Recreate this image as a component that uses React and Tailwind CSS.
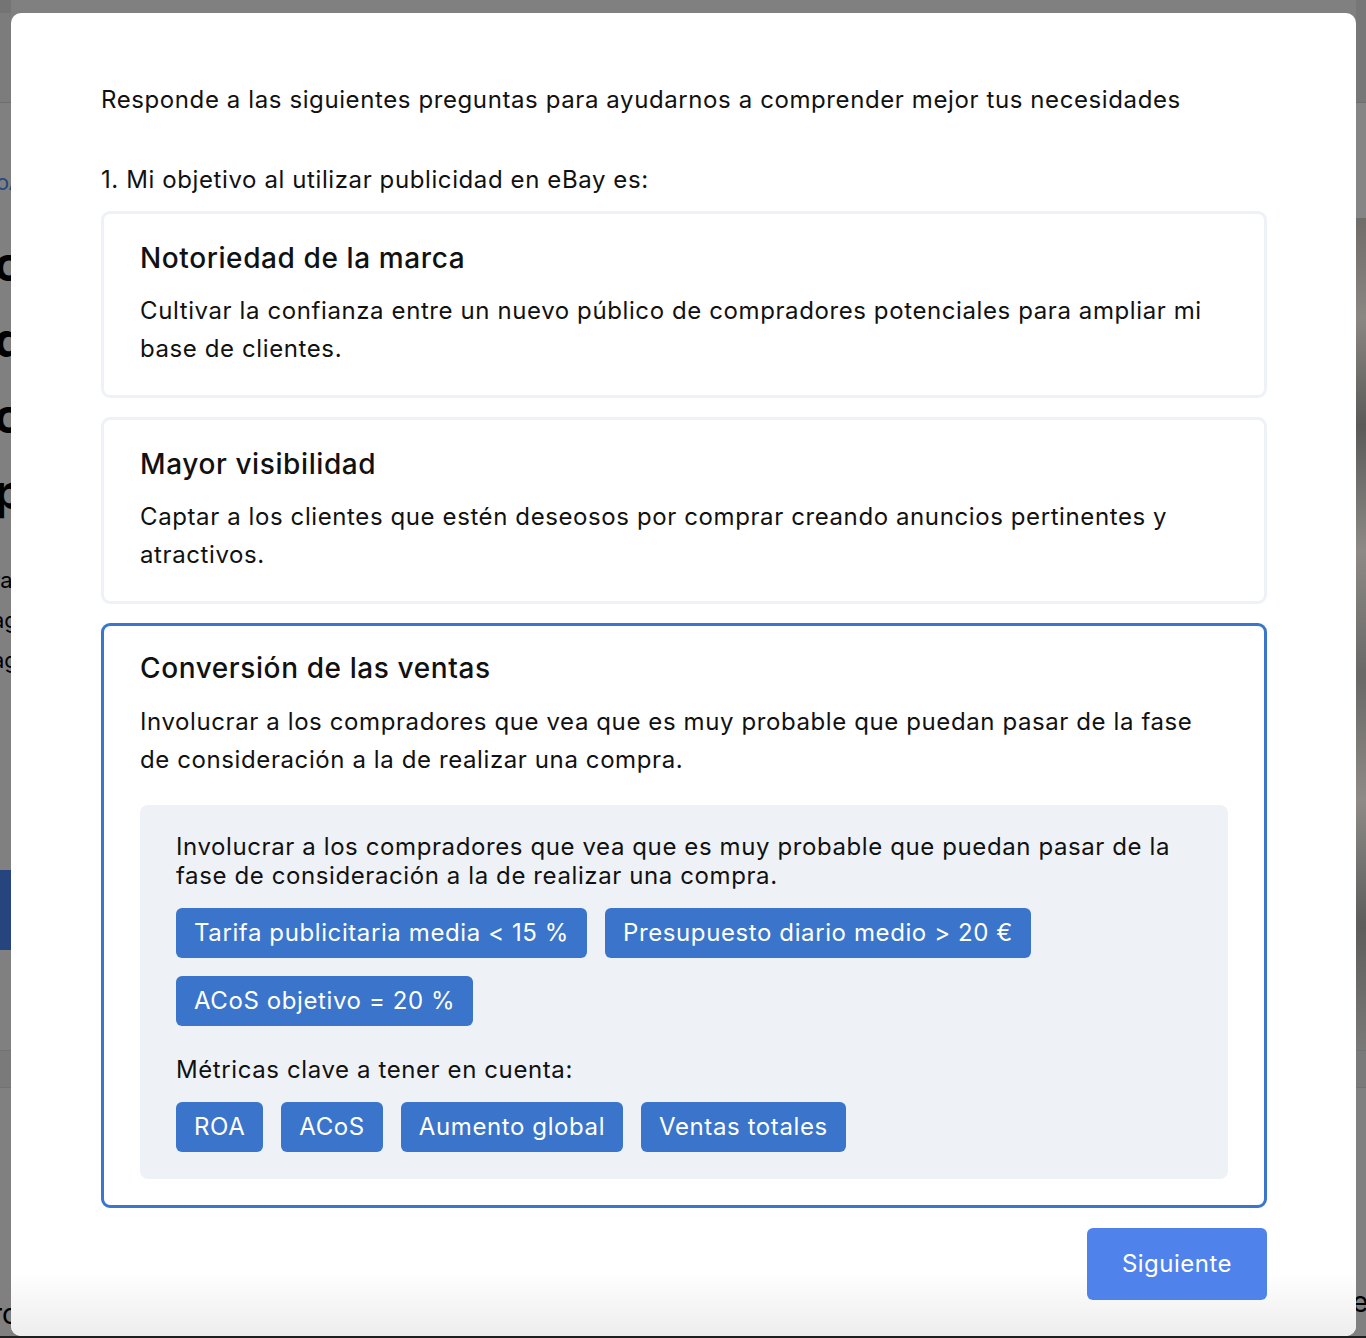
import React, { useState } from 'react';

const goals = [
  {
    id: 'brand',
    title: 'Notoriedad de la marca',
    text: 'Cultivar la confianza entre un nuevo público de compradores potenciales para ampliar mi base de clientes.',
  },
  {
    id: 'visibility',
    title: 'Mayor visibilidad',
    text: 'Captar a los clientes que estén deseosos por comprar creando anuncios pertinentes y atractivos.',
  },
  {
    id: 'conversion',
    title: 'Conversión de las ventas',
    text: 'Involucrar a los compradores que vea que es muy probable que puedan pasar de la fase de consideración a la de realizar una compra.',
  },
];

const targets = ['Tarifa publicitaria media < 15 %', 'Presupuesto diario medio > 20 €', 'ACoS objetivo = 20 %'];
const metrics = ['ROA', 'ACoS', 'Aumento global', 'Ventas totales'];

const Pill = ({ children }) => (
  <span className="flex h-[50px] items-center rounded-[6px] bg-[#3a75cb] px-[18px] text-[24px] leading-none text-white">
    {children}
  </span>
);

const GoalCard = ({ goal, selected, onSelect }) => (
  <div
    onClick={onSelect}
    className={`cursor-pointer rounded-[9px] border-[3px] px-[36px] ${
      selected ? 'border-[#3a76cc] pt-[24px] pb-[26px]' : 'border-[#eef2f7] pt-[26px] pb-[27px]'
    }`}
  >
    <h3 className="text-[28px] leading-[36px] font-medium">{goal.title}</h3>
    <p className={`${selected ? 'mt-[17px]' : 'mt-[16px]'} text-[24px] leading-[38px]`}>{goal.text}</p>

    {selected && (
      <div className="mt-[26px] rounded-[8px] bg-[#eef2f7] px-[36px] pt-[27px] pb-[27px]">
        <p className="text-[24px] leading-[29px]">{goal.text}</p>
        <div className="mt-[18px] flex flex-wrap gap-[18px]">
          {targets.map((t) => (
            <Pill key={t}>{t}</Pill>
          ))}
        </div>
        <p className="mt-[29px] text-[24px] leading-[29px]">Métricas clave a tener en cuenta:</p>
        <div className="mt-[18px] flex flex-wrap gap-[18px]">
          {metrics.map((m) => (
            <Pill key={m}>{m}</Pill>
          ))}
        </div>
      </div>
    )}
  </div>
);

export default function App() {
  const [selected, setSelected] = useState('conversion');

  return (
    <div className="flex h-[1338px] flex-col overflow-hidden bg-[#808080] font-['Inter',sans-serif] tracking-[0.6px] text-[#111]">
      <div className="flex flex-1 overflow-hidden">
        {/* page behind the overlay, left edge */}
        <div className="flex w-[11px] shrink-0 flex-col overflow-hidden tracking-normal">
          <div className="h-[13px] bg-[#747474]"></div>
          <div className="h-[90px] border-b border-[#6e6e6e] bg-[#7c7c7c]"></div>
          <div className="ml-[-4px] mt-[68px] text-[22px] leading-none text-[#28467f]">oA</div>
          <div className="ml-[-6px] mt-[50px] flex flex-col gap-[34px] text-[48px] leading-[42px] font-bold text-black">
            <span>co</span>
            <span>de</span>
            <span>ca</span>
            <span>pu</span>
          </div>
          <div className="ml-[-8px] mt-[55px] flex flex-col gap-[16px] text-[22px] leading-[24px] text-black">
            <span>ra</span>
            <span>ag</span>
            <span>ag</span>
          </div>
          <div className="mt-[198px] h-[80px] bg-[#26457f]"></div>
          <div className="mt-[100px] h-[38px] border-y border-[#727272] bg-[#7a7a7a]"></div>
          <div className="ml-[-8px] mt-[212px] text-[28px] leading-none text-black">ro</div>
        </div>

        {/* modal */}
        <div className="mt-[13px] flex w-[1345px] shrink-0 flex-col rounded-[10px] bg-white">
          <div className="flex-1 px-[89px] pl-[90px] pt-[69px]">
            <p className="text-[24px] leading-[36px]">
              Responde a las siguientes preguntas para ayudarnos a comprender mejor tus necesidades
            </p>
            <p className="mt-[44px] text-[24px] leading-[36px]">1. Mi objetivo al utilizar publicidad en eBay es:</p>

            <div className="mt-[13px] flex flex-col gap-[19px]">
              {goals.map((g) => (
                <GoalCard key={g.id} goal={g} selected={selected === g.id} onSelect={() => setSelected(g.id)} />
              ))}
            </div>
          </div>

          <div className="flex justify-end rounded-b-[10px] bg-gradient-to-b from-white via-white to-[#ededed] pt-[19px] pr-[89px] pb-[36px]">
            <button className="h-[72px] w-[180px] rounded-[6px] bg-[#4f82ea] text-[24px] text-white tracking-[0.5px]">
              Siguiente
            </button>
          </div>
        </div>

        {/* page behind the overlay, right edge */}
        <div className="flex w-[10px] shrink-0 flex-col overflow-hidden tracking-normal">
          <div className="h-[103px] border-b border-[#6e6e6e] bg-[#777777]"></div>
          <div className="h-[115px] bg-[#858585]"></div>
          <div className="h-[832px] bg-[linear-gradient(180deg,#6f6c69_0%,#8a8682_12%,#5b5a58_25%,#8c8986_40%,#6a6866_55%,#8d8a87_70%,#5e5d5c_85%,#7b7977_100%)]"></div>
          <div className="h-[38px] border-y border-[#727272] bg-[#7a7a7a]"></div>
          <div className="ml-[-4px] mt-[200px] text-[28px] leading-none text-black">e</div>
        </div>
      </div>
      <div className="h-[2px] bg-[#1e1e1e]"></div>
    </div>
  );
}
